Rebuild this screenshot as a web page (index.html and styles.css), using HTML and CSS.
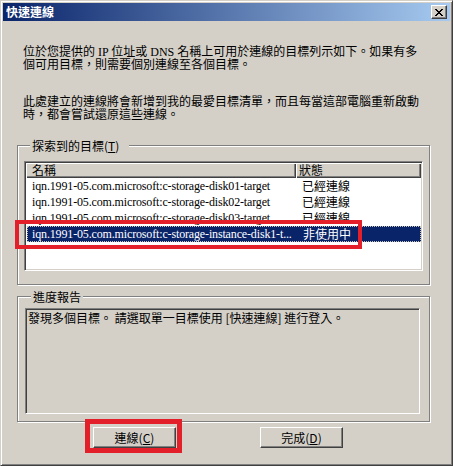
FILE: index.html
```html
<!DOCTYPE html>
<html>
  <head>
    <meta charset="utf-8" />
    <title>快速連線</title>
    <link rel="stylesheet" href="styles.css">
  </head>
  <body>
    <div class="window">
      <div class="titlebar">
        <span class="title">快速連線</span>
        <button class="close-btn">
          <svg width="8" height="7" viewBox="0 0 8 7">
            <path d="M0 0h2v1h1v1h2v-1h1v-1h2v1h-1v1h-1v1h-1v1h1v1h1v1h1v1h-2v-1h-1v-1h-2v1h-1v1h-2v-1h1v-1h1v-1h1v-1h-1v-1h-1v-1h-1z" fill="#000"/>
          </svg>
        </button>
      </div>

      <p class="intro">位於您提供的 IP 位址或 DNS 名稱上可用於連線的目標列示如下。如果有多<br>個可用目標，則需要個別連線至各個目標。</p>
      <p class="intro second">此處建立的連線將會新增到我的最愛目標清單，而且每當這部電腦重新啟動<br>時，都會嘗試還原這些連線。</p>

      <div class="group targets">
        <div class="group-label">探索到的目標(<u>T</u>)</div>
        <div class="listbox">
          <div class="list-head">
            <div class="col-name">名稱</div>
            <div class="col-state">狀態</div>
          </div>
          <div class="row">
            <div class="cell-name">iqn.1991-05.com.microsoft:c-storage-disk01-target</div>
            <div class="cell-state">已經連線</div>
          </div>
          <div class="row">
            <div class="cell-name">iqn.1991-05.com.microsoft:c-storage-disk02-target</div>
            <div class="cell-state">已經連線</div>
          </div>
          <div class="row">
            <div class="cell-name">iqn.1991-05.com.microsoft:c-storage-disk03-target</div>
            <div class="cell-state">已經連線</div>
          </div>
          <div class="row selected">
            <div class="cell-name">iqn.1991-05.com.microsoft:c-storage-instance-disk1-t...</div>
            <div class="cell-state">非使用中</div>
          </div>
        </div>
      </div>

      <div class="group progress">
        <div class="group-label">進度報告</div>
        <div class="report">發現多個目標。 請選取單一目標使用 [快速連線] 進行登入。</div>
      </div>

      <div class="actions">
        <button class="btn">連線(<u>C</u>)</button>
        <button class="btn">完成(<u>D</u>)</button>
      </div>

      <div class="mark mark-row"></div>
      <div class="mark mark-btn"></div>
    </div>
  </body>
</html>
```

FILE: styles.css
```css
body {
  margin: 0;
  background: #d4d0c8;
}
.window {
  position: relative;
  width: 453px;
  height: 466px;
  box-sizing: border-box;
  padding: 2px;
  background: #d4d0c8;
  border: 1px solid;
  border-color: #d4d0c8 #404040 #404040 #d4d0c8;
  box-shadow: inset 1px 1px #fff, inset -1px -1px #808080;
  font-family: "Liberation Serif", "Noto Sans CJK TC", serif;
  font-size: 12px;
  line-height: 13px;
  color: #000;
  overflow: hidden;
}
.titlebar {
  display: flex;
  align-items: center;
  justify-content: space-between;
  height: 18px;
  padding: 0 3px 0 3px;
  background: linear-gradient(to right, #0a246a, #a6caf0);
}
.title {
  color: #fff;
  font-family: "Noto Sans CJK TC", sans-serif;
  font-weight: bold;
  font-size: 12px;
  line-height: 14px;
}
.close-btn {
  display: flex;
  align-items: center;
  justify-content: center;
  width: 16px;
  height: 14px;
  padding: 0;
  background: #d4d0c8;
  border: 1px solid;
  border-color: #fff #404040 #404040 #fff;
  box-shadow: inset -1px -1px #808080;
}
.intro {
  margin: 25px 0 0 20px;
  white-space: nowrap;
}
.intro.second {
  margin-top: 24px;
}

.group {
  width: 413px;
  box-sizing: border-box;
  margin-left: 14px;
  border: 1px solid #808080;
  box-shadow: inset 1px 1px #fff, 1px 1px #fff;
}
.group-label {
  width: fit-content;
  margin: -7px 0 0 6px;
  padding: 0 10px 0 2px;
  background: #d4d0c8;
  font-family: "Noto Sans CJK TC", sans-serif;
}
.targets {
  margin-top: 23px;
  padding: 0 6px 13px 6px;
}
.progress {
  margin-top: 11px;
  padding: 0 9px 7px 7px;
}
.progress .group-label {
  padding-right: 2px;
}

.listbox {
  margin-top: 9px;
  height: 110px;
  box-sizing: border-box;
  padding: 1px;
  background: #fff;
  border: 1px solid;
  border-color: #808080 #fff #fff #808080;
  box-shadow: inset 1px 1px #404040, inset -1px -1px #d4d0c8;
}
.list-head {
  display: flex;
  height: 15px;
}
.list-head div {
  box-sizing: border-box;
  background: #d4d0c8;
  font-family: "Noto Sans CJK TC", sans-serif;
  line-height: 14px;
  box-shadow: inset 1px 1px #fff, inset -1px -1px #404040, inset -2px -2px #808080;
}
.col-name {
  width: 270px;
  padding-left: 6px;
}
.col-state {
  flex: 1;
  padding-left: 3px;
}
.row {
  display: flex;
  height: 16px;
  line-height: 16px;
  white-space: nowrap;
}
.cell-name {
  width: 270px;
  box-sizing: border-box;
  padding-left: 6px;
  letter-spacing: -0.15px;
  overflow: hidden;
}
.cell-state {
  flex: 1;
  padding-left: 6px;
  font-family: "Noto Sans CJK TC", sans-serif;
}
.row.selected {
  margin-left: 1px;
  background: #0a246a;
  color: #fff;
  outline: 1px dotted #c9c4b8;
  outline-offset: -1px;
}
.row.selected .cell-name {
  padding-left: 5px;
}

.report {
  margin-top: 5px;
  height: 106px;
  box-sizing: border-box;
  padding: 2px 2px;
  border: 1px solid;
  border-color: #808080 #fff #fff #808080;
  box-shadow: inset 1px 1px #404040, inset -1px -1px #d4d0c8;
  font-family: "Noto Sans CJK TC", sans-serif;
  white-space: nowrap;
}

.actions {
  display: flex;
  gap: 84px;
  margin-top: 5px;
  padding-left: 90px;
}
.btn {
  width: 83px;
  height: 21px;
  padding: 0;
  background: #d4d0c8;
  border: 1px solid;
  border-color: #fff #404040 #404040 #fff;
  box-shadow: inset -1px -1px #808080;
  font-family: "Noto Sans CJK TC", sans-serif;
  font-size: 12px;
  color: #000;
}

.mark {
  position: absolute;
  box-sizing: border-box;
  border: 4px solid #e3202a;
}
.mark-row {
  left: 14px;
  top: 219px;
  width: 347px;
  height: 29px;
}
.mark-btn {
  left: 84px;
  top: 418px;
  width: 97px;
  height: 34px;
  border-width: 5px;
}
```
